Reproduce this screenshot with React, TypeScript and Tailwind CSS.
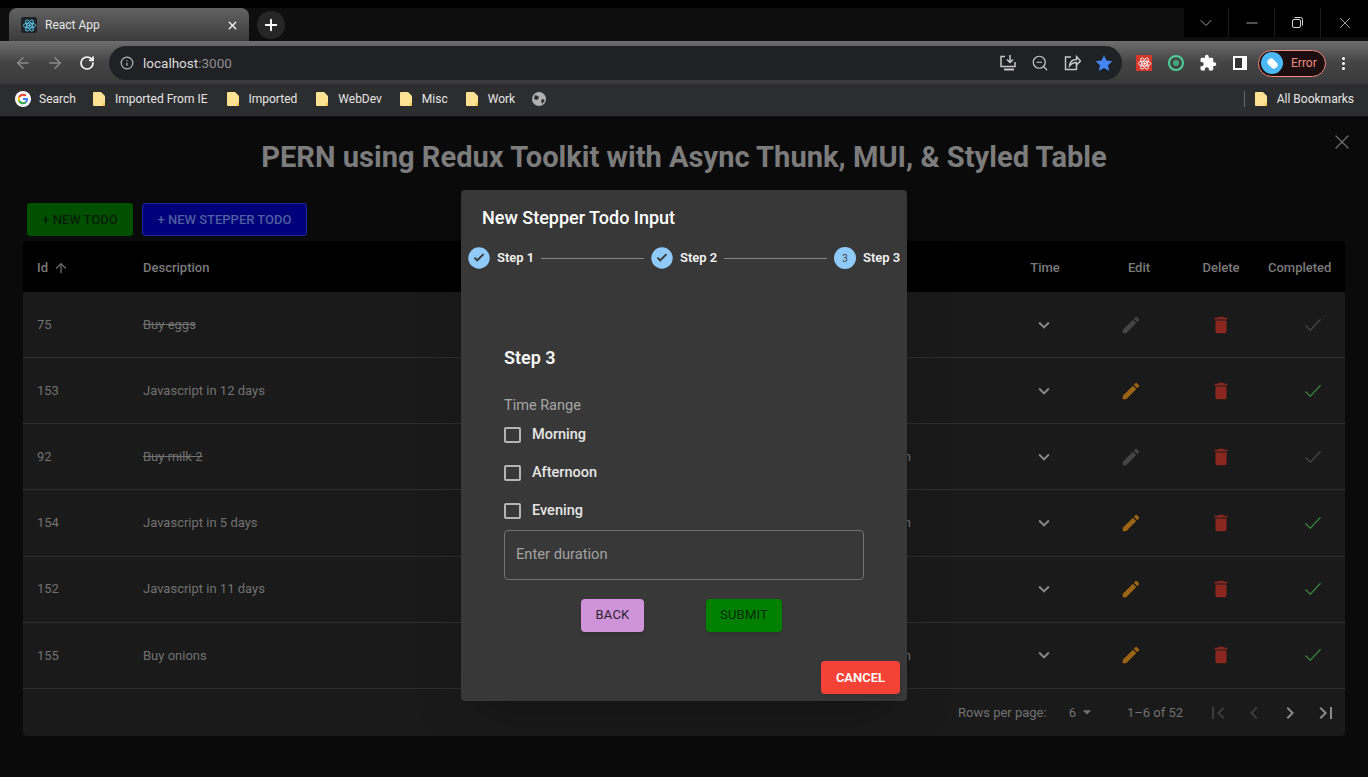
import React from 'react';
import { ArrowLeft, ArrowRight, ChevronDown, Info, Minus, Plus, RotateCw, X, ZoomOut } from 'lucide-react';

const todos = [
  { id: 75, text: 'Buy eggs', done: true, tail: false },
  { id: 153, text: 'Javascript in 12 days', done: false, tail: false },
  { id: 92, text: 'Buy milk 2', done: true, tail: true },
  { id: 154, text: 'Javascript in 5 days', done: false, tail: true },
  { id: 152, text: 'Javascript in 11 days', done: false, tail: false },
  { id: 155, text: 'Buy onions', done: false, tail: true },
];

const Mui = ({ d, size = 24, className = '' }: { d: string; size?: number; className?: string }) => (
  <svg width={size} height={size} viewBox="0 0 24 24" fill="currentColor" className={className}>
    <path d={d} />
  </svg>
);

const Folder = () => (
  <svg width="12" height="14" viewBox="0 0 12 14" className="shrink-0">
    <path d="M0 1a1 1 0 0 1 1-1h7l4 4v9a1 1 0 0 1-1 1H1a1 1 0 0 1-1-1z" fill="#fde293" />
    <path d="M10 14h1a1 1 0 0 0 1-1v-2h-2z" fill="#f4c542" />
  </svg>
);

const Atom = ({ color, size }: { color: string; size: number }) => (
  <svg width={size} height={size} viewBox="0 0 24 24" fill="none" stroke={color} strokeWidth="1.4">
    <ellipse cx="12" cy="12" rx="10" ry="4" />
    <ellipse cx="12" cy="12" rx="10" ry="4" transform="rotate(60 12 12)" />
    <ellipse cx="12" cy="12" rx="10" ry="4" transform="rotate(120 12 12)" />
    <circle cx="12" cy="12" r="2" fill={color} stroke="none" />
  </svg>
);

const GoogleG = () => (
  <svg width="16" height="16" viewBox="0 0 48 48" className="shrink-0">
    <circle cx="24" cy="24" r="24" fill="#fff" />
    <g transform="translate(8 8) scale(.667)">
      <path fill="#EA4335" d="M24 9.5c3.5 0 6.700 1.200 9.200 3.600l6.900-6.900C35.900 2.400 30.500 0 24 0 14.600 0 6.500 5.400 2.600 13.200l8 6.200C12.500 13.700 17.800 9.500 24 9.500z" />
      <path fill="#4285F4" d="M46.900 24.500c0-1.600-.1-3.100-.4-4.500H24v9h12.900c-.6 3-2.200 5.500-4.700 7.200l7.700 6c4.500-4.200 7-10.300 7-17.700z" />
      <path fill="#FBBC05" d="M10.500 28.600c-.5-1.400-.8-3-.8-4.600s.3-3.200.8-4.600l-8-6.200C.9 16.400 0 20.100 0 24s.9 7.600 2.600 10.800z" />
      <path fill="#34A853" d="M24 48c6.500 0 11.900-2.100 15.900-5.800l-7.700-6c-2.100 1.400-4.900 2.300-8.200 2.300-6.200 0-11.500-4.200-13.400-9.900l-8 6.200C6.500 42.600 14.600 48 24 48z" />
    </g>
  </svg>
);

const Bookmark = ({ label, className = '' }: { label: string; className?: string }) => (
  <div className={`flex items-center gap-[10px] ${className}`}>
    <Folder />
    <span className="whitespace-nowrap">{label}</span>
  </div>
);

const StepCheck = () => (
  <svg width="22" height="22" viewBox="0 0 22 22" className="shrink-0">
    <circle cx="11" cy="11" r="10.700" fill="#90caf9" />
    <path d="M9.200 14.700 5.800 11.300l1.300-1.300 2.100 2.100 5.700-5.700 1.300 1.300z" fill="#383838" />
  </svg>
);

const Checkbox = ({ label }: { label: string }) => (
  <div className="flex h-[38px] items-center">
    <span className="h-[16px] w-[17px] rounded-[2px] border-2 border-[#b4b4b4]" />
    <span className="ml-[11px] text-[14.5px] font-medium text-[#e6e6e6]">{label}</span>
  </div>
);

const StepperModal = () => (
  <div className="absolute left-[461px] top-[190px] flex h-[511px] w-[446px] flex-col rounded-[4px] bg-[#383838] shadow-2xl">
    <h2 className="ml-[21px] mt-[16px] text-[18px] font-medium leading-[24px] text-white">New Stepper Todo Input</h2>
    <div className="ml-[7px] mt-[17px] flex h-[22px] items-center whitespace-nowrap text-[13px] font-semibold text-[#f2f2f2]">
      <StepCheck />
      <span className="ml-[7px] w-[36px]">Step 1</span>
      <span className="ml-[8px] h-px w-[103px] bg-[#858585]" />
      <span className="ml-[7px]"><StepCheck /></span>
      <span className="ml-[7px] w-[37px]">Step 2</span>
      <span className="ml-[7px] h-px w-[103px] bg-[#858585]" />
      <span className="ml-[7px] flex h-[22px] w-[22px] items-center justify-center rounded-full bg-[#90caf9] text-[10px] font-normal text-[#444]">3</span>
      <span className="ml-[7px]">Step 3</span>
    </div>
    <div className="ml-[43px] mt-[77px] w-[360px]">
      <h3 className="text-[18px] font-semibold leading-[24px] text-[#f5f5f5]">Step 3</h3>
      <p className="mt-[26px] text-[14.5px] leading-[20px] text-[#a6a6a6]">Time Range</p>
      <div className="flex flex-col">
        <Checkbox label="Morning" />
        <Checkbox label="Afternoon" />
        <Checkbox label="Evening" />
      </div>
      <div className="flex h-[50px] items-center rounded-[4px] border border-[#717171] pb-[2px] pl-[11px] text-[14.7px] text-[#a3a3a3]">Enter duration</div>
      <div className="mt-[19px] flex pl-[77px] text-[13px]">
        <button className="h-[33px] w-[63px] rounded-[4px] bg-[#ce93d8] pb-[2px] tracking-[0.2px] text-[#2c2230] shadow-md">BACK</button>
        <button className="ml-[62px] h-[33px] w-[76px] rounded-[4px] bg-[#008000] pb-[2px] tracking-[0.2px] text-[#062c06] shadow-md">SUBMIT</button>
      </div>
    </div>
    <button className="ml-auto mr-[7px] mt-[29px] h-[33px] w-[79px] rounded-[4px] bg-[#f44336] text-[13px] font-semibold text-white shadow-md">CANCEL</button>
  </div>
);

const BrowserChrome = () => (
  <header className="font-['Roboto',sans-serif] text-[12px]">
    <div className="flex h-[41px] border-t-[8px] border-black bg-[#0e0e0e]">
      <div className="ml-[9px] flex h-[33px] w-[240px] items-center rounded-t-[8px] bg-gradient-to-b from-[#626262] to-[#3b3b3b] pl-[12px] pt-[1px] text-[#e8e8e8]">
        <span className="flex h-[16px] w-[16px] items-center justify-center rounded-[2px] bg-[#20232a]"><Atom color="#61dafb" size={15} /></span>
        <span className="ml-[8px] text-[12px]">React App</span>
        <X size={13} strokeWidth={2.5} className="ml-auto mr-[10px] text-[#eee]" />
      </div>
      <span className="ml-[8px] mt-[3px] flex h-[28px] w-[28px] items-center justify-center rounded-full bg-[#262626]">
        <Plus size={18} strokeWidth={2.5} className="text-white" />
      </span>
      <div className="ml-auto flex h-[29px] bg-black text-[#d6d6d6]">
        <span className="flex w-[45px] items-center justify-center border-r border-[#1c1c1c]"><ChevronDown size={20} strokeWidth={0.9} /></span>
        <span className="flex w-[46px] items-center justify-center border-r border-[#1c1c1c]"><Minus size={18} strokeWidth={1} /></span>
        <span className="flex w-[46px] items-center justify-center border-r border-[#1c1c1c]">
          <svg width="11" height="11" viewBox="0 0 11 11" fill="none" stroke="currentColor"><rect x=".5" y="2.500" width="8" height="8" rx="1.500" /><path d="M2.500.5h6a2 2 0 0 1 2 2v6" /></svg>
        </span>
        <span className="flex w-[47px] items-center justify-center"><X size={18} strokeWidth={1} /></span>
      </div>
    </div>
    <div className="flex h-[43px] items-center bg-gradient-to-b from-[#6e6e6e] via-[#444] to-[#3a3a3a] pt-[1px] text-white">
      <ArrowLeft size={18} className="ml-[14px] text-[#8b8b8b]" />
      <ArrowRight size={18} className="ml-[14px] text-[#8b8b8b]" />
      <RotateCw size={16} strokeWidth={2.5} className="ml-[15px]" />
      <div className="ml-[14px] flex h-[34px] w-[1013px] items-center rounded-full bg-[#202124] text-[#dcdcdc]">
        <Info size={14} className="ml-[11px] text-[#b9b9b9]" />
        <span className="ml-[9px] text-[13.5px]">localhost<span className="text-[#8f8f8f]">:3000</span></span>
        <div className="ml-auto mr-[9px] flex items-center gap-[14px] text-[#c8c8c8]">
          <svg width="18" height="18" viewBox="0 0 18 18" fill="none" stroke="currentColor" strokeWidth="1.500">
            <path d="M6 2.500H2v10h14V8" /><path d="M11 1v7M8 5.500 11 8.500l3-3" /><path d="M5 15.500h10" strokeWidth="2" />
          </svg>
          <ZoomOut size={18} strokeWidth={1.600} />
          <svg width="18" height="18" viewBox="0 0 18 18" fill="none" stroke="currentColor" strokeWidth="1.400">
            <path d="M8 3H2.500v12.500h11V11" /><path d="M6.500 12c.5-4 3-6.500 7-6.500V2.500l4 4.500-4 4V8.500c-3 0-5 1-7 3.500z" />
          </svg>
          <svg width="18" height="18" viewBox="0 0 24 24" fill="#4285f4"><path d="M12 1.500 15.300 8.700l7.900.9-5.900 5.300 1.700 7.800L12 18.700l-7 4 1.700-7.800L.8 9.600l7.900-.9z" /></svg>
        </div>
      </div>
      <span className="ml-[14px] flex h-[16px] w-[16px] items-center justify-center bg-[#d4382c]"><Atom color="#fff" size={15} /></span>
      <span className="ml-[16px] flex h-[16px] w-[16px] items-center justify-center rounded-full border-2 border-[#4fd09a]"><span className="h-[6px] w-[6px] rounded-full bg-[#3fa877]" /></span>
      <Mui size={18} className="ml-[15px] text-white" d="M20.500 11H19V7c0-1.100-.9-2-2-2h-4V3.500C13 2.120 11.880 1 10.500 1S8 2.120 8 3.500V5H4c-1.100 0-1.990.9-1.990 2v3.800H3.500c1.490 0 2.700 1.210 2.700 2.700s-1.210 2.700-2.700 2.700H2V20c0 1.100.9 2 2 2h3.800v-1.500c0-1.490 1.210-2.700 2.700-2.700 1.490 0 2.700 1.210 2.700 2.700V22H17c1.100 0 2-.9 2-2v-4h1.500c1.380 0 2.500-1.120 2.500-2.500S21.880 11 20.500 11z" />
      <span className="ml-[16px] flex h-[14px] w-[14px] justify-start border-2 border-white bg-white"><span className="h-full w-[7px] bg-[#333]" /></span>
      <div className="ml-[11px] flex h-[27px] w-[68px] items-center rounded-full border border-[#f28b82] bg-[#1c0e0e] pl-[2px]">
        <span className="flex h-[22px] w-[22px] items-center justify-center rounded-full bg-[#4cb8f5]"><span className="h-[7px] w-[11px] rotate-45 rounded-[3px] bg-white" /></span>
        <span className="ml-[8px] text-[12px] text-[#f28b82]">Error</span>
      </div>
      <span className="ml-[16px] flex flex-col gap-[2px]">
        <span className="h-[3px] w-[3px] rounded-full bg-white" />
        <span className="h-[3px] w-[3px] rounded-full bg-white" />
        <span className="h-[3px] w-[3px] rounded-full bg-white" />
      </span>
    </div>
    <div className="flex h-[33px] items-center border-b border-[#111] bg-[#2c2d2f] pb-[2px] pl-[15px] text-[#e6e6e6]">
      <GoogleG />
      <span className="ml-[8px]">Search</span>
      <Bookmark label="Imported From IE" className="ml-[17px]" />
      <Bookmark label="Imported" className="ml-[19px]" />
      <Bookmark label="WebDev" className="ml-[19px]" />
      <Bookmark label="Misc" className="ml-[18px]" />
      <Bookmark label="Work" className="ml-[18px]" />
      <svg width="14" height="14" viewBox="0 0 14 14" className="ml-[17px]"><circle cx="7" cy="7" r="7" fill="#b0b0b0" /><path d="M3 3l3 1 1 2-2 2-3-1zM9 8l3-1 .5 2-2.500 3z" fill="#2c2d2f" /></svg>
      <span className="ml-auto h-[16px] w-px bg-[#666]" />
      <Bookmark label="All Bookmarks" className="ml-[10px] mr-[14px]" />
    </div>
  </header>
);

const TodoRow = ({ todo }: { todo: (typeof todos)[number] }) => (
  <div className="grid h-[66.17px] grid-cols-[120px_640px_128px_99px_70px_118px_46px_1fr] items-center border-b border-[#2e2e2e] text-[13px] text-[#727272]">
    <span className="pl-[14px]">{todo.id}</span>
    <span className={todo.done ? 'line-through' : ''}>{todo.text}</span>
    <span className="text-right">{todo.tail ? 'n' : ''}</span>
    <span />
    <span className="flex justify-center pr-[2px] text-[#8a8a8a]">
      <Mui size={22} d="M7.410 8.590 12 13.170l4.590-4.580L18 10l-6 6-6-6 1.410-1.410z" />
    </span>
    <span className="flex justify-center pr-[16px]">
      <Mui size={22} className={todo.done ? 'text-[#444]' : 'text-[#9a6414]'} d="M3 17.250V21h3.750L17.810 9.940l-3.750-3.750L3 17.250zM20.710 7.040c.39-.39.39-1.020 0-1.410l-2.340-2.340a.9959.9959 0 0 0-1.410 0l-1.830 1.830 3.750 3.750 1.830-1.830z" />
    </span>
    <span className="flex justify-center text-[#8a2820]">
      <Mui size={22} d="M6 19c0 1.100.9 2 2 2h8c1.100 0 2-.9 2-2V7H6v12zM19 4h-3.500l-1-1h-5l-1 1H5v2h14V4z" />
    </span>
    <span className="pl-[58px]">
      <svg width="22" height="22" viewBox="0 0 24 24" fill="none" stroke="currentColor" strokeWidth="1.500" className={todo.done ? 'text-[#444]' : 'text-[#3a7d3d]'}>
        <path d="M3.800 12.600 9 17.800 20.200 5.800" />
      </svg>
    </span>
  </div>
);

export default function App() {
  return (
    <div className="relative h-[777px] w-[1368px] overflow-hidden bg-[#0a0a0a] font-['Roboto',sans-serif]">
      <BrowserChrome />
      <main className="px-[23px]">
        <div className="relative">
          <h1 className="pt-[22px] text-center text-[29.1px] font-bold leading-[36px] text-[#7c7c7c]">PERN using Redux Toolkit with Async Thunk, MUI, &amp; Styled Table</h1>
          <X size={24} strokeWidth={1.200} className="absolute right-[-9px] top-[13px] text-[#6e6e6e]" />
        </div>
        <div className="ml-[4px] mt-[28px] flex gap-[9px] text-[13px] font-medium">
          <button className="h-[33px] w-[106px] rounded-[3px] bg-[#005000] text-[#062006]">+ NEW TODO</button>
          <button className="h-[33px] w-[165px] rounded-[3px] border border-[#1a2a9c] bg-[#00007a] text-[#4e5e9e]">+ NEW STEPPER TODO</button>
        </div>
        <div className="mt-[5px] w-[1322px] overflow-hidden rounded-[4px] bg-[#1a1a1a]">
          <div className="grid h-[51px] grid-cols-[120px_640px_128px_99px_70px_118px_46px_1fr] items-center bg-black pt-[2px] text-[13px] font-medium text-[#7a7a7a]">
            <span className="flex items-center gap-[5px] pl-[14px]">Id <Mui size={16} className="text-[#6a6a6a]" d="M4 12l1.410 1.410L11 7.830V20h2V7.830l5.580 5.590L20 12l-8-8-8 8z" /></span>
            <span>Description</span>
            <span />
            <span />
            <span className="text-center">Time</span>
            <span className="text-center">Edit</span>
            <span className="text-center">Delete</span>
            <span className="pl-[24px] whitespace-nowrap">Completed</span>
          </div>
          {todos.map(todo => <TodoRow key={todo.id} todo={todo} />)}
          <div className="flex h-[47px] items-center text-[13px] text-[#727272]">
            <span className="ml-[935px]">Rows per page:</span>
            <span className="ml-[22px]">6</span>
            <svg width="20" height="20" viewBox="0 0 24 24" fill="currentColor" className="ml-[1px]"><path d="M7 10l5 5 5-5z" /></svg>
            <span className="ml-[30px]">1–6 of 52</span>
            <div className="ml-[17px] flex pt-[1px]">
              <Mui className="mx-[6px] text-[#3c3c3c]" d="M18.410 16.590 13.820 12l4.590-4.590L17 6l-6 6 6 6zM6 6h2v12H6z" />
              <Mui className="mx-[6px] text-[#3c3c3c]" d="M15.410 7.410 14 6l-6 6 6 6 1.410-1.410L10.830 12z" />
              <Mui className="mx-[6px] text-[#8a8a8a]" d="M10 6 8.590 7.410 13.170 12l-4.580 4.590L10 18l6-6z" />
              <Mui className="mx-[6px] text-[#8a8a8a]" d="M5.590 7.410 10.180 12l-4.590 4.590L7 18l6-6-6-6zM16 6h2v12h-2z" />
            </div>
          </div>
        </div>
      </main>
      <StepperModal />
    </div>
  );
}
